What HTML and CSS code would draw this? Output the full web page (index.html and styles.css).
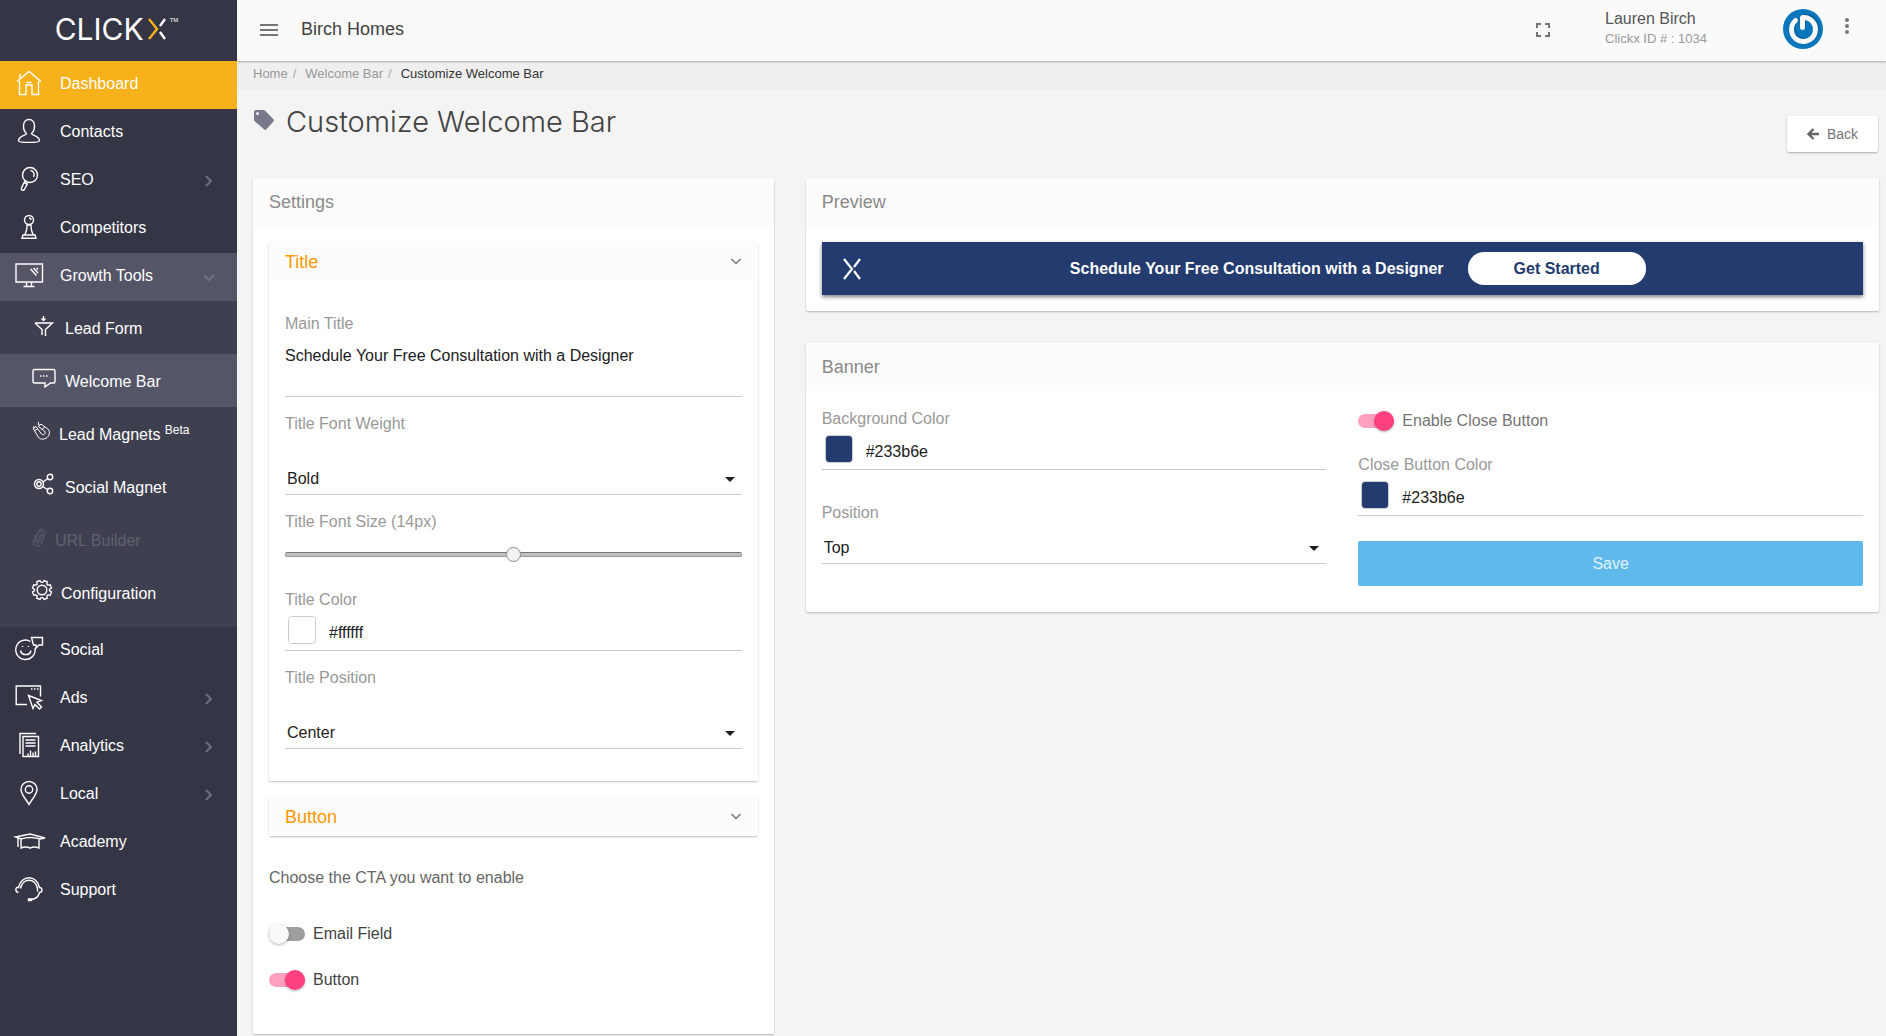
FILE: index.html
```html
<!DOCTYPE html>
<html lang="en">
<head>
    <meta charset="UTF-8">
    <meta name="viewport" content="width=device-width, initial-scale=1.0">
    <title>Customize Welcome Bar</title>
    <link rel="stylesheet" href="styles.css">
</head>
<body>
    <aside class="sidebar">
        <a class="logo" href="#">
            <span class="logo-text">CLICK</span>
            <svg class="logo-mark" viewBox="0 0 18 22" width="18" height="22">
                <path class="gold" d="M1 1l8 10-8 10"/>
                <path d="M17 1l-5 7M17 21l-5-7"/>
            </svg>
            <span class="logo-tm">TM</span>
        </a>
        <nav class="menu">
            <a class="menu-item current" href="#">
                <svg viewBox="0 0 28 28" width="28" height="28">
                    <path d="M2 12.500L14 2.500l12 10M4.500 12v13.500h6.500v-9.500h6v9.500h6.500V12M5 9.500V5M11.500 13.500h5"/>
                </svg>
                <span>Dashboard</span>
            </a>
            <a class="menu-item" href="#">
                <svg viewBox="0 0 28 28" width="28" height="28">
                    <path d="M11.500 16.500C9 14.500 8.500 12 8.500 9c0-4 2.300-6.500 5.500-6.500s5.500 2.500 5.500 6.500c0 3-.5 5.500-3 7.500 0 2 8 2 8 7.200 0 2.200-21 2.200-21 0 0-5.200 8-5.200 8-7.200z"/>
                </svg>
                <span>Contacts</span>
            </a>
            <a class="menu-item" href="#">
                <svg viewBox="0 0 28 28" width="28" height="28">
                    <circle cx="15" cy="10" r="7.500"/>
                    <path d="M15.500 5.500c3 .3 4.500 3.500 3 6.500M10.500 16l-1.500 2M12.500 17.500l-1.500 2M9 17.500l-2.500 5.500c-.8 2 1.600 3.300 2.800 1.500l3-5.500z"/>
                </svg>
                <span>SEO</span>
                <svg class="arrow" viewBox="0 0 12 12" width="12" height="12"><path d="M3 1l5 5-5 5"/></svg>
            </a>
            <a class="menu-item" href="#">
                <svg viewBox="0 0 28 28" width="28" height="28">
                    <circle cx="14" cy="7" r="4.500"/>
                    <path d="M14 5c1.500 0 2 1 2 2M11.500 12h5M12 12c0 5-.8 7.500-2.500 10h9c-1.700-2.500-2.500-5-2.500-10M8 22h12l1 3.300H7z"/>
                </svg>
                <span>Competitors</span>
            </a>
            <a class="menu-item open" href="#">
                <svg viewBox="0 0 28 28" width="28" height="28">
                    <path d="M1 3h26.500v18H1zM11.500 21v4M16.500 21v4M8.500 25.500h11M15.500 8l6 6.500M18.500 7l4.500 5M21.500 7l1.500 1.500"/>
                </svg>
                <span>Growth Tools</span>
                <svg class="arrow" viewBox="0 0 12 12" width="12" height="12"><path d="M1 4l5 5 5-5"/></svg>
            </a>
            <div class="submenu">
                <a class="submenu-item" href="#">
                    <svg viewBox="0 0 24 24" width="24" height="24">
                        <path d="M3 10h17.500l-7 6.500V23M3 10l7 6.500V22M11.500 3v4M9.500 5.500l2 2 2-2"/>
                    </svg>
                    <span>Lead Form</span>
                </a>
                <a class="submenu-item active" href="#">
                    <svg viewBox="0 0 24 24" width="24" height="24">
                        <path d="M2.500 3.500h19q1.500 0 1.500 1.500v10.500q0 1.500-1.500 1.500h-3L13 21v-4H2.500Q1 17 1 15.500V5q0-1.500 1.500-1.500zM8 10h1.500M11 10h1.500M14 10h1.500"/>
                    </svg>
                    <span>Welcome Bar</span>
                </a>
                <a class="submenu-item" href="#">
                    <svg class="thin" viewBox="0 0 18 24" width="18" height="24">
                        <path d="M1 9l5.500 9.500c5 5 14-2 10-8L9 5 6.500 7.500l6 4.500c2 2.500-1 5-3 3L4 7.500zM6.500 7.500l2-2.500M3 11.500L6 9.500M10 10.500l2.500-2.500M6.500 3v3M1 7.500l2 1.500"/>
                    </svg>
                    <span>Lead Magnets <sup>Beta</sup></span>
                </a>
                <a class="submenu-item" href="#">
                    <svg viewBox="0 0 24 24" width="24" height="24">
                        <circle cx="7" cy="12" r="4.500"/><circle cx="7" cy="12" r="2.200"/>
                        <circle cx="18" cy="5" r="2.700"/><circle cx="18" cy="19" r="2.700"/>
                        <path d="M11 10l5-3.500M10.500 14.500l5 3"/>
                    </svg>
                    <span>Social Magnet</span>
                </a>
                <a class="submenu-item disabled" href="#">
                    <svg class="thin" viewBox="0 0 14 24" width="14" height="24">
                        <path d="M8.500 9.500l-3 6.500c-.8 1.800-3 1-2.300-1L6.500 6.500c1.500-4 7.500-2.500 6.500 2L9.500 18c-2 5-9.500 3.500-8-2L4 9.500M5.500 8.500C7 5 11.500 6 10.500 9l-3 7.500c-1 2-4 2-4.500 0"/>
                    </svg>
                    <span>URL Builder</span>
                </a>
                <a class="submenu-item" href="#">
                    <svg viewBox="0 0 20 24" width="20" height="24">
                        <circle cx="10" cy="12" r="4.800"/>
                        <path d="M10.700 4.400L12.100 2.500 15.200 3.800 14.900 6.200 15.800 7.100 18.200 6.800 19.500 9.900 17.600 11.300V12.700L19.500 14.100 18.200 17.200 15.800 16.900 14.900 17.800 15.200 20.200 12.100 21.500 10.700 19.600H9.300L7.900 21.500 4.800 20.200 5.100 17.800 4.200 16.900 1.800 17.200.5 14.100 2.400 12.700V11.300L.5 9.900 1.800 6.800 4.200 7.100 5.100 6.200 4.800 3.800 7.900 2.500 9.300 4.400z"/>
                    </svg>
                    <span>Configuration</span>
                </a>
            </div>
            <a class="menu-item" href="#">
                <svg viewBox="0 0 28 28" width="28" height="28">
                    <path d="M15.500 6.500A9.700 9.700 0 1 0 20 13M16.500 2.500H27.500V10h-3.500L21 13v-3h-2.500zM5.500 15.500c1 5.500 9.500 5.500 10.500 0M7.500 11v1M13.500 11v1"/>
                </svg>
                <span>Social</span>
            </a>
            <a class="menu-item" href="#">
                <svg viewBox="0 0 28 28" width="28" height="28">
                    <path d="M12 21.500H1.200V3h24.300v10.500M16 6h1.500M19 6h1.500M22 6h1.500M13.500 12.500l13 5-4.500 1.800 4.500 4.700-2 2-4.500-4.500-2 4z"/>
                </svg>
                <span>Ads</span>
                <svg class="arrow" viewBox="0 0 12 12" width="12" height="12"><path d="M3 1l5 5-5 5"/></svg>
            </a>
            <a class="menu-item" href="#">
                <svg viewBox="0 0 28 28" width="28" height="28">
                    <path d="M8 5.500h15.500v20H8zM5 23V2.500h16M10.500 9h10M10.500 12h10M10.500 15h10M13 25.500v-3M15.500 25.500v-6M18 25.500v-4M20.500 25.500v-5"/>
                </svg>
                <span>Analytics</span>
                <svg class="arrow" viewBox="0 0 12 12" width="12" height="12"><path d="M3 1l5 5-5 5"/></svg>
            </a>
            <a class="menu-item" href="#">
                <svg viewBox="0 0 28 28" width="28" height="28">
                    <path d="M14 25.500c-3-5.500-8-10-8-15a8 8 0 0 1 16 0c0 5-5 9.500-8 15z"/>
                    <circle cx="14" cy="10.500" r="3.700"/>
                </svg>
                <span>Local</span>
                <svg class="arrow" viewBox="0 0 12 12" width="12" height="12"><path d="M3 1l5 5-5 5"/></svg>
            </a>
            <a class="menu-item" href="#">
                <svg viewBox="0 0 28 28" width="28" height="28">
                    <path d="M.5 10L15 7l15 4-5 1q-10-3-19 0zM6 12v9q4.500-2 9 0 4.500-2 9 0v-9M3 11v9"/>
                </svg>
                <span>Academy</span>
            </a>
            <a class="menu-item" href="#">
                <svg viewBox="0 0 28 28" width="28" height="28">
                    <path d="M3.500 17.500C-.5 17 .5 11 3.500 12.500c2.500-13 18.500-13 21 0 3.500 0 3 5 0 5-1 4-3.500 6.500-8 7M5.500 13.500c2-11 15-11 17 0v3M13.500 24h3v1.500h-3z"/>
                </svg>
                <span>Support</span>
            </a>
        </nav>
    </aside>

    <div class="page">
        <header class="topbar">
            <button class="icon-button" type="button" aria-label="Toggle menu">
                <svg viewBox="0 0 18 12" width="18" height="12"><path d="M0 0h18v2H0zM0 5h18v2H0zM0 10h18v2H0z"/></svg>
            </button>
            <span class="company">Birch Homes</span>
            <button class="icon-button fullscreen" type="button" aria-label="Full screen">
                <svg viewBox="0 0 14 14" width="14" height="14"><path d="M0 0h5v2H2v3H0zM9 0h5v5h-2V2H9zM0 9h2v3h3v2H0zM12 9h2v5H9v-2h3z"/></svg>
            </button>
            <div class="user">
                <span class="user-name">Lauren Birch</span>
                <span class="user-id">Clickx ID # : 1034</span>
            </div>
            <svg class="avatar" viewBox="0 0 40 40" width="40" height="40">
                <circle cx="20" cy="20" r="20" fill="#0a77bd"/>
                <path d="M13.500 11.500a12 12 0 1 0 6.500-3.500v10.500" fill="none" stroke="#07558a" stroke-width="6" stroke-linecap="round" opacity=".5"/>
                <path d="M12.500 11.500A12 12 0 1 0 19.500 8.500v10" fill="none" stroke="#f7f7f5" stroke-width="5" stroke-linecap="round" stroke-linejoin="round"/>
            </svg>
            <button class="icon-button more" type="button" aria-label="More">
                <svg viewBox="0 0 4 16" width="4" height="16"><circle cx="2" cy="2" r="2"/><circle cx="2" cy="8" r="2"/><circle cx="2" cy="14" r="2"/></svg>
            </button>
        </header>

        <nav class="breadcrumb">
            <a href="#">Home</a>
            <a href="#">Welcome Bar</a>
            <span>Customize Welcome Bar</span>
        </nav>

        <main class="content">
            <div class="page-header">
                <svg viewBox="0 0 20 20" width="20" height="20">
                    <path d="M2 0h7.500q1 0 1.700.7l8.200 8.600q1 1.200 0 2.300l-7 7.700q-1.200 1.200-2.400 0L.7 11.200Q0 10.500 0 9.500V2Q0 0 2 0zM3.500 2a1.500 1.500 0 1 0 0 3 1.500 1.500 0 0 0 0-3z" fill="#77788a" fill-rule="evenodd"/>
                </svg>
                <h1>Customize Welcome Bar</h1>
                <button class="back-button" type="button">
                    <svg viewBox="0 0 12 12" width="12" height="12"><path d="M6.500 1L1.500 6l5 5M2 6h10"/></svg>
                    Back
                </button>
            </div>

            <div class="row">
                <div class="col-4">
                    <section class="card">
                        <h2 class="card-header">Settings</h2>
                        <div class="card-body">
                            <div class="panel">
                                <h3 class="panel-header">
                                    Title
                                    <svg viewBox="0 0 12 12" width="12" height="12"><path d="M1.500 3L6 7.500 10.500 3"/></svg>
                                </h3>
                                <div class="panel-body">
                                    <div class="field">
                                        <label for="main-title">Main Title</label>
                                        <textarea id="main-title">Schedule Your Free Consultation with a Designer</textarea>
                                    </div>
                                    <div class="field">
                                        <label for="title-weight">Title Font Weight</label>
                                        <div class="select spaced">
                                            <select id="title-weight">
                                                <option>Normal</option>
                                                <option selected>Bold</option>
                                            </select>
                                        </div>
                                    </div>
                                    <div class="field">
                                        <label for="title-size">Title Font Size (14px)</label>
                                        <div class="slider-row">
                                            <input class="slider" id="title-size" type="range" min="8" max="20" value="14">
                                        </div>
                                    </div>
                                    <div class="field">
                                        <label for="title-color">Title Color</label>
                                        <div class="color-row">
                                            <input class="swatch" type="color" value="#ffffff" aria-label="Pick title color">
                                            <input class="hex" id="title-color" type="text" value="#ffffff">
                                        </div>
                                    </div>
                                    <div class="field">
                                        <label for="title-position">Title Position</label>
                                        <div class="select spaced">
                                            <select id="title-position">
                                                <option>Left</option>
                                                <option selected>Center</option>
                                                <option>Right</option>
                                            </select>
                                        </div>
                                    </div>
                                </div>
                            </div>

                            <div class="panel">
                                <h3 class="panel-header">
                                    Button
                                    <svg viewBox="0 0 12 12" width="12" height="12"><path d="M1.500 3L6 7.500 10.500 3"/></svg>
                                </h3>
                            </div>

                            <p class="cta-text">Choose the CTA you want to enable</p>
                            <div class="cta-options">
                                <label class="toggle"><input type="checkbox">Email Field</label>
                                <label class="toggle"><input type="checkbox" checked>Button</label>
                            </div>
                        </div>
                    </section>
                </div>

                <div class="col-8">
                    <section class="card">
                        <h2 class="card-header">Preview</h2>
                        <div class="card-body">
                            <div class="welcome-bar">
                                <svg viewBox="0 0 18 22" width="18" height="22"><path d="M1 1l8 10-8 10M17 1l-6 8M17 21l-6-8"/></svg>
                                <div class="welcome-content">
                                    <span>Schedule Your Free Consultation with a Designer</span>
                                    <button type="button">Get Started</button>
                                </div>
                            </div>
                        </div>
                    </section>

                    <section class="card">
                        <h2 class="card-header">Banner</h2>
                        <div class="banner-body">
                            <div class="banner-col">
                                <div class="field">
                                    <label for="bg-color">Background Color</label>
                                    <div class="color-row">
                                        <input class="swatch" type="color" value="#233b6e" aria-label="Pick background color">
                                        <input class="hex" id="bg-color" type="text" value="#233b6e">
                                    </div>
                                </div>
                                <div class="field position-field">
                                    <label for="bar-position">Position</label>
                                    <div class="select">
                                        <select id="bar-position">
                                            <option>Top</option>
                                            <option>Bottom</option>
                                        </select>
                                    </div>
                                </div>
                            </div>
                            <div class="banner-col">
                                <label class="toggle muted"><input type="checkbox" checked>Enable Close Button</label>
                                <div class="field">
                                    <label for="close-color">Close Button Color</label>
                                    <div class="color-row">
                                        <input class="swatch" type="color" value="#233b6e" aria-label="Pick close button color">
                                        <input class="hex" id="close-color" type="text" value="#233b6e">
                                    </div>
                                </div>
                                <button class="save-button" type="button">Save</button>
                            </div>
                        </div>
                    </section>
                </div>
            </div>
        </main>
    </div>
</body>
</html>
```

FILE: styles.css
```css
* {
    box-sizing: border-box;
}

body {
    margin: 0;
    display: flex;
    min-height: 100vh;
    background-color: #f4f4f4;
    color: #212121;
    font-family: "Liberation Sans", Arial, sans-serif;
    font-size: 16px;
    line-height: 20px;
}

a {
    color: inherit;
    text-decoration: none;
}

button, input, select, textarea {
    font: inherit;
    color: inherit;
}

button {
    border: none;
    cursor: pointer;
}

/* Sidebar */
.sidebar {
    flex: 0 0 237px;
    background-color: #353645;
    color: #fff;
}

.sidebar svg {
    flex: none;
    fill: none;
    stroke: currentColor;
    stroke-width: 1.4;
    overflow: visible;
}

.logo {
    display: flex;
    justify-content: center;
    align-items: center;
    gap: 4px;
    height: 61px;
    padding: 0 4px 3px 0;
}

.logo-text {
    font-family: Inter, "Liberation Sans", sans-serif;
    font-weight: 400;
    font-size: 30px;
    line-height: 32px;
}

.sidebar .logo-mark {
    stroke-width: 2.4;
}

.logo-mark .gold {
    stroke: #f7b11b;
}

.logo-tm {
    align-self: flex-start;
    padding-top: 15px;
    font-size: 6px;
    line-height: 10px;
}

.menu-item {
    display: flex;
    align-items: center;
    gap: 17px;
    height: 48px;
    padding: 0 22px 2px 15px;
}

.menu-item svg {
    margin-bottom: 2px;
}

.menu-item.current {
    background-color: #f7b11b;
}

.menu-item.open, .submenu-item.active {
    background-color: #545667;
}

.menu-item .arrow {
    margin: 2px 0 0 auto;
    color: #6f7181;
    stroke-width: 2;
}

.submenu {
    padding-bottom: 8px;
    background-color: #3f404f;
}

.submenu-item {
    display: flex;
    align-items: center;
    gap: 9px;
    height: 53px;
    padding: 2px 0 0 32px;
}

.submenu-item svg {
    margin-bottom: 8px;
}

.submenu-item .thin {
    stroke-width: 1;
}

.submenu-item sup {
    font-size: 12px;
    line-height: 0;
}

.submenu-item.disabled {
    color: #5f6070;
}

/* Top bar */
.page {
    flex: 1;
    min-width: 0;
}

.topbar {
    position: relative;
    display: flex;
    align-items: center;
    height: 61px;
    padding: 0 37px 3px 23px;
    background-color: #fafafa;
    box-shadow: 0 1px 2px rgba(0, 0, 0, 0.3);
}

.icon-button {
    display: flex;
    padding: 2px 0 0;
    background: none;
    color: #757575;
}

.icon-button svg {
    fill: currentColor;
}

.company {
    margin-left: 23px;
    color: #424242;
    font-size: 18px;
}

.fullscreen {
    margin-left: auto;
}

.user {
    display: flex;
    flex-direction: column;
    width: 178px;
    margin-left: 55px;
}

.user-name {
    color: #555;
}

.user-id {
    color: #999;
    font-size: 13px;
}

.more {
    margin-left: 22px;
    padding: 0 0 6px;
}

/* Breadcrumb */
.breadcrumb {
    display: flex;
    height: 29px;
    padding: 3px 16px;
    background-color: #efefef;
    color: #333;
    font-size: 13px;
}

.breadcrumb a {
    color: #999;
}

.breadcrumb a::after {
    content: "/";
    padding: 0 9px 0 5px;
    color: #aaa;
}

/* Content */
.content {
    padding: 16px 7px 0 16px;
}

.page-header {
    display: flex;
    align-items: flex-start;
    gap: 12px;
    margin-bottom: 26px;
    padding: 0 1px;
}

.page-header > svg {
    margin-top: 4px;
}

.page-header h1 {
    margin: 0;
    color: #424242;
    font-family: Inter, "Liberation Sans", sans-serif;
    font-weight: 300;
    font-size: 29px;
    line-height: 32px;
}

.back-button {
    display: flex;
    align-items: center;
    gap: 8px;
    height: 36px;
    margin: 10px 0 0 auto;
    padding: 0 20px;
    border-radius: 2px;
    background-color: #fff;
    color: #757575;
    font-size: 14px;
    box-shadow: 0 1px 2px rgba(0, 0, 0, 0.3);
}

.back-button svg {
    fill: none;
    stroke: #666;
    stroke-width: 2.4;
}

.row {
    display: flex;
    margin: 0 -16px;
}

.col-4, .col-8 {
    padding: 0 16px;
}

.col-4 {
    width: 33.3333%;
}

.col-8 {
    width: 66.6667%;
}

.card, .panel {
    border-radius: 2px;
    background-color: #fff;
    box-shadow: 0 1px 2px rgba(0, 0, 0, 0.25);
}

.card {
    margin-bottom: 32px;
}

.col-4 .card {
    margin-bottom: 0;
}

.card-header {
    margin: 0;
    padding: 14px 16px;
    background-color: #fcfcfc;
    color: #8a8a8a;
    font-weight: normal;
    font-size: 18px;
}

.card-body {
    padding: 16px;
}

.panel {
    margin-bottom: 16px;
}

.panel-header {
    display: flex;
    justify-content: space-between;
    align-items: center;
    height: 39px;
    margin: 0;
    padding: 0 16px;
    background-color: #fcfcfc;
    color: #ff9800;
    font-weight: normal;
    font-size: 18px;
}

.panel-header svg {
    fill: none;
    stroke: #757575;
    stroke-width: 1.5;
}

.panel-body {
    padding: 32px 16px;
}

/* Form fields */
.field + .field {
    margin-top: 16px;
}

.field label {
    display: block;
    color: #999;
    line-height: 22px;
}

textarea {
    display: block;
    width: 100%;
    height: 62px;
    padding: 11px 0;
    border: none;
    border-bottom: 1px solid #ccc;
    background: none;
    resize: none;
}

.select {
    position: relative;
}

.select::after {
    content: "";
    position: absolute;
    top: 16px;
    right: 7px;
    border: 5px solid transparent;
    border-top-color: #212121;
    pointer-events: none;
}

.select.spaced {
    margin-top: 26px;
}

select {
    display: block;
    appearance: none;
    width: 100%;
    height: 34px;
    padding: 2px 2px 0;
    border: none;
    border-bottom: 1px solid #ccc;
    border-radius: 0;
    background: none;
}

.slider-row {
    padding: 14px 0 11px;
}

.slider {
    display: block;
    appearance: none;
    width: 100%;
    height: 15px;
    margin: 0;
    background: none;
}

.slider::-webkit-slider-runnable-track {
    height: 5px;
    border: 1px solid #999;
    border-top-color: #777;
    border-radius: 2px;
    background-color: #bfbfbf;
}

.slider::-webkit-slider-thumb {
    appearance: none;
    width: 15px;
    height: 15px;
    margin-top: -6px;
    border: 1px solid #8c8c8c;
    border-radius: 50%;
    background-color: #f2f2f2;
}

.color-row {
    display: flex;
    gap: 13px;
    height: 40px;
    padding: 5px 3px 0;
    border-bottom: 1px solid #ccc;
}

.swatch {
    appearance: none;
    flex: none;
    width: 28px;
    height: 28px;
    padding: 0;
    overflow: hidden;
    border: 1px solid #ccc;
    border-radius: 4px;
    background: none;
}

.swatch::-webkit-color-swatch-wrapper {
    padding: 0;
}

.swatch::-webkit-color-swatch {
    border: none;
}

.hex {
    flex: 1;
    min-width: 0;
    height: 34px;
    padding: 0;
    border: none;
    background: none;
}

/* Toggles */
.toggle {
    display: flex;
    align-items: center;
    gap: 8px;
    color: #424242;
}

.toggle.muted {
    color: #757575;
}

.toggle input {
    appearance: none;
    display: flex;
    align-items: center;
    width: 36px;
    height: 14px;
    margin: 0;
    border-radius: 7px;
    background-color: #9e9e9e;
}

.toggle input::before {
    content: "";
    width: 20px;
    height: 20px;
    border-radius: 50%;
    background-color: #fafafa;
    box-shadow: 0 1px 3px rgba(0, 0, 0, 0.3);
}

.toggle input:checked {
    justify-content: flex-end;
    background-color: #ff9fbf;
}

.toggle input:checked::before {
    background-color: #ff4081;
}

.cta-text {
    margin: 32px 0 36px;
    color: #666;
}

.cta-options {
    display: flex;
    flex-direction: column;
    gap: 26px;
    padding-bottom: 28px;
}

/* Welcome bar preview */
.welcome-bar {
    display: flex;
    align-items: center;
    height: 53px;
    padding: 0 8px 0 21px;
    background-color: #233b6e;
    color: #fff;
    font-weight: bold;
    box-shadow: 0 2px 4px rgba(0, 0, 0, 0.5);
}

.welcome-bar svg {
    flex: none;
    fill: none;
    stroke: #fff;
    stroke-width: 2.2;
}

.welcome-content {
    display: flex;
    justify-content: center;
    align-items: center;
    flex: 1;
    gap: 24px;
}

.welcome-content button {
    height: 33px;
    padding: 0 46px;
    border-radius: 16px;
    background-color: #fff;
    color: #233b6e;
}

/* Banner */
.banner-body {
    display: flex;
    gap: 32px;
    padding: 17px 16px 26px;
}

.banner-col {
    flex: 1;
}

.banner-col .position-field {
    margin-top: 32px;
}

.position-field .select {
    margin-top: 6px;
}

.banner-col .toggle {
    margin: 3px 0 23px;
}

.save-button {
    display: block;
    width: 100%;
    height: 45px;
    margin-top: 25px;
    border-radius: 2px;
    background-color: #5fb9ea;
    color: #e2f3fc;
}
```
